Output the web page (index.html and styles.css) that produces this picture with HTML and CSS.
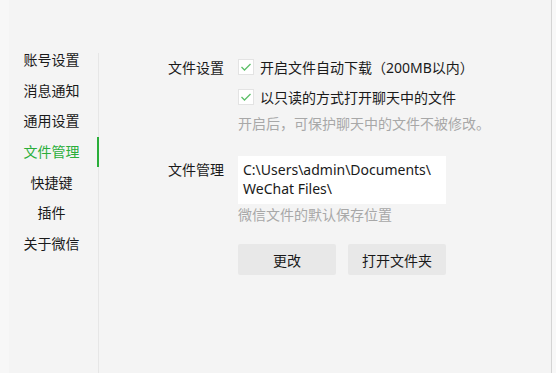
FILE: index.html
```html
<!DOCTYPE html>
<html lang="zh-CN">
<head>
    <meta charset="UTF-8">
    <meta name="viewport" content="width=device-width, initial-scale=1.0">
    <title>设置</title>
    <link rel="stylesheet" href="styles.css">
</head>
<body>
    <div class="window">
        <div class="sidebar">
            <ul class="nav">
                <li class="nav-item">账号设置</li>
                <li class="nav-item">消息通知</li>
                <li class="nav-item">通用设置</li>
                <li class="nav-item active">文件管理</li>
                <li class="nav-item">快捷键</li>
                <li class="nav-item">插件</li>
                <li class="nav-item">关于微信</li>
            </ul>
        </div>
        <div class="content">
            <div class="field">
                <div class="label">文件设置</div>
                <div class="control">
                    <label class="check-row">
                        <span class="checkbox">
                            <svg width="12" height="12" viewBox="0 0 12 12"><polyline points="1.5,6 4.5,9 10.5,3" fill="none" stroke="#5cbf68" stroke-width="1.3"/></svg>
                        </span>
                        开启文件自动下载（200MB以内）
                    </label>
                    <label class="check-row">
                        <span class="checkbox">
                            <svg width="12" height="12" viewBox="0 0 12 12"><polyline points="1.5,6 4.5,9 10.5,3" fill="none" stroke="#5cbf68" stroke-width="1.3"/></svg>
                        </span>
                        以只读的方式打开聊天中的文件
                    </label>
                    <p class="hint hint-check">开启后，可保护聊天中的文件不被修改。</p>
                </div>
            </div>
            <div class="field field-path">
                <div class="label label-path">文件管理</div>
                <div class="control">
                    <div class="path-box">C:\Users\admin\Documents\<br>WeChat Files\</div>
                    <p class="hint">微信文件的默认保存位置</p>
                    <div class="buttons">
                        <button class="btn">更改</button>
                        <button class="btn">打开文件夹</button>
                    </div>
                </div>
            </div>
        </div>
        <div class="edge"></div>
    </div>
</body>
</html>
```

FILE: styles.css
```css
* {
    box-sizing: border-box;
}

body {
    margin: 0;
    font-family: "Noto Sans", "Noto Sans CJK SC", sans-serif;
    font-size: 14px;
    color: #1a1a1a;
    background-color: #f4f4f4;
    overflow: hidden;
}

.window {
    display: flex;
    height: 373px;
    background: linear-gradient(to right, #f7f7f7 9px, #f4f4f4 9px);
}

.sidebar {
    width: 99px;
    flex-shrink: 0;
    margin-top: 53px;
    border-right: 1px solid #e6e6e6;
}

.nav {
    list-style: none;
    margin: -9px 0 0;
    padding: 0 0 0 5px;
}

.nav-item {
    position: relative;
    height: 30.67px;
    line-height: 30.67px;
    text-align: center;
    font-family: "Noto Sans CJK SC", sans-serif;
}

.nav-item.active {
    color: #2aae3a;
}

.nav-item.active::after {
    content: "";
    position: absolute;
    right: -1px;
    top: 1px;
    width: 2px;
    height: 30px;
    background-color: #2aae3a;
}

.content {
    flex: 1;
    padding: 52px 0 0 69px;
}

.field {
    display: grid;
    grid-template-columns: 56px 1fr;
    column-gap: 14px;
}

.label {
    line-height: 30px;
    font-family: "Noto Sans CJK SC", sans-serif;
}

.label-path {
    line-height: 19px;
    padding-top: 4px;
}

.check-row {
    display: flex;
    align-items: center;
    gap: 6px;
    height: 30px;
    font-family: "Noto Sans", "Noto Sans CJK SC", sans-serif;
}

.checkbox {
    display: flex;
    align-items: center;
    justify-content: center;
    width: 16px;
    height: 16px;
    background: #ffffff;
    border: 1px solid #e3e3e3;
}

.hint {
    margin: 0;
    color: #a8a8a8;
    font-size: 14px;
    line-height: 20px;
    font-family: "Noto Sans CJK SC", sans-serif;
}

.hint-check {
    line-height: 22px;
}

.field-path {
    margin-top: 22px;
}

.path-box {
    width: 208px;
    height: 48px;
    padding: 4px 5px;
    background: #ffffff;
    line-height: 19px;
    font-size: 14px;
}

.buttons {
    display: flex;
    gap: 12px;
    margin-top: 20px;
}

.btn {
    width: 98px;
    height: 31px;
    border: none;
    border-radius: 2px;
    background-color: #e8e8e8;
    color: #1a1a1a;
    font-family: "Noto Sans CJK SC", sans-serif;
    font-size: 14px;
    padding: 0;
}

.edge {
    width: 5px;
    flex-shrink: 0;
    background-color: #f8f8f8;
    border-left: 1px solid #d4d4d4;
}
```
